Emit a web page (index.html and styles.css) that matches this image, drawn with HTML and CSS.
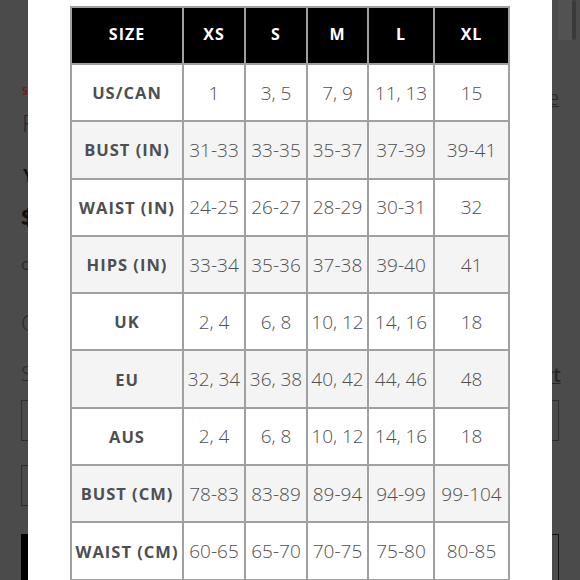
FILE: index.html
```html
<!DOCTYPE html>
<html>
<head>
<meta charset="utf-8">
<link rel="stylesheet" href="styles.css">
</head>
<body>
<div class="screen">
  <div class="strip strip-left">
    <span class="ghost g-red">5</span>
    <span class="ghost g-f">F</span>
    <span class="ghost g-y">Y</span>
    <span class="ghost g-dollar">$</span>
    <span class="ghost g-c">c</span>
    <span class="ghost g-cc">C</span>
    <span class="ghost g-s">S</span>
    <span class="ghost-box gb-1"></span>
    <span class="ghost-box gb-2"></span>
    <span class="ghost-block gl-3"></span>
  </div>
  <div class="modal">
    <table class="chart">
      <colgroup>
        <col class="c-label"><col class="c-xs"><col class="c-s"><col class="c-m"><col class="c-l"><col class="c-xl">
      </colgroup>
      <thead>
        <tr><th>SIZE</th><th>XS</th><th>S</th><th>M</th><th>L</th><th>XL</th></tr>
      </thead>
      <tbody>
        <tr><td class="lbl">US/CAN</td><td>1</td><td>3, 5</td><td>7, 9</td><td>11, 13</td><td>15</td></tr>
        <tr class="alt"><td class="lbl">BUST (IN)</td><td>31-33</td><td>33-35</td><td>35-37</td><td>37-39</td><td>39-41</td></tr>
        <tr><td class="lbl">WAIST (IN)</td><td>24-25</td><td>26-27</td><td>28-29</td><td>30-31</td><td>32</td></tr>
        <tr class="alt"><td class="lbl">HIPS (IN)</td><td>33-34</td><td>35-36</td><td>37-38</td><td>39-40</td><td>41</td></tr>
        <tr><td class="lbl">UK</td><td>2, 4</td><td>6, 8</td><td>10, 12</td><td>14, 16</td><td>18</td></tr>
        <tr class="alt"><td class="lbl">EU</td><td>32, 34</td><td>36, 38</td><td>40, 42</td><td>44, 46</td><td>48</td></tr>
        <tr><td class="lbl">AUS</td><td>2, 4</td><td>6, 8</td><td>10, 12</td><td>14, 16</td><td>18</td></tr>
        <tr class="alt"><td class="lbl">BUST (CM)</td><td>78-83</td><td>83-89</td><td>89-94</td><td>94-99</td><td>99-104</td></tr>
        <tr><td class="lbl">WAIST (CM)</td><td>60-65</td><td>65-70</td><td>70-75</td><td>75-80</td><td>80-85</td></tr>
      </tbody>
    </table>
  </div>
  <div class="strip strip-right">
    <span class="top-shade"></span>
    <span class="scroll-thumb"></span>
    <span class="ghost r-e">e</span>
    <span class="ghost r-rt">rt</span>
    <span class="ghost-box rb-1"></span>
    <span class="ghost-box rb-2"></span>
  </div>
</div>
</body>
</html>
```

FILE: styles.css
```css
html, body {
  margin: 0;
  padding: 0;
  background: #4b4b4b;
}
.screen {
  display: flex;
  width: 580px;
  height: 580px;
  overflow: hidden;
}
.strip {
  position: relative;
  width: 28px;
  flex: 0 0 28px;
  background: #4b4b4b;
  overflow: hidden;
}
.modal {
  flex: 0 0 524px;
  background: #ffffff;
  padding: 6px 0 0 42px;
  box-sizing: border-box;
  overflow: hidden;
}
.ghost {
  position: absolute;
  font-family: "Open Sans", "Liberation Sans", sans-serif;
  color: #1e1e1e;
  line-height: 1;
}
.g-red { left: 22px; top: 86px; font-size: 10px; font-weight: 700; color: #6e1c22; }
.g-f { left: 22px; top: 111px; font-size: 24px; font-weight: 300; color: #262626; }
.g-y { left: 23px; top: 166px; font-size: 18px; font-weight: 700; color: #111; }
.g-dollar { left: 21px; top: 205px; font-size: 24px; font-weight: 700; color: #111; }
.g-c { left: 21px; top: 255px; font-size: 17px; color: #2a2a2a; }
.g-cc { left: 21px; top: 311px; font-size: 22px; font-weight: 300; color: #2a2a2a; }
.g-s { left: 21px; top: 363px; font-size: 21px; font-weight: 300; color: #2a2a2a; }
.ghost-box {
  position: absolute;
  border: 1px solid #2e2e2e;
  box-sizing: border-box;
}
.gb-1 { left: 21px; top: 400px; width: 20px; height: 41px; }
.gb-2 { left: 21px; top: 465px; width: 20px; height: 41px; }
.ghost-block {
  position: absolute;
  left: 21px; top: 534px; width: 20px; height: 60px;
  background: #000;
}
.top-shade {
  position: absolute;
  left: 6px; top: 0; width: 18px; height: 40px;
  background: #525252;
}
.scroll-thumb {
  position: absolute;
  left: 20px; top: 0; width: 4px; height: 40px;
  background: #3a3a3a;
  border-radius: 2px;
}
.r-e {
  left: -4px; top: 88px; font-size: 20px; font-weight: 300;
  color: #262626; text-decoration: underline; text-decoration-thickness: 1px;
}
.r-rt {
  left: -7px; top: 366px; font-size: 19px; font-weight: 600;
  color: #262626; text-decoration: underline; text-decoration-thickness: 1px;
}
.rb-1 { left: -12px; top: 400px; width: 19px; height: 41px; border-color: #2e2e2e; }
.rb-2 { left: -12px; top: 534px; width: 19px; height: 60px; border-color: #111; }

.chart {
  border-collapse: collapse;
  table-layout: fixed;
  width: 438px;
}
.c-label { width: 112px; }
.c-xs { width: 62px; }
.c-s { width: 62px; }
.c-m { width: 61px; }
.c-l { width: 66px; }
.c-xl { width: 75px; }
.chart th,
.chart td {
  border: 2px solid #a0a0a0;
  text-align: center;
  vertical-align: middle;
  padding: 0;
  white-space: nowrap;
}
.chart th {
  height: 52px;
  padding-bottom: 3px;
  background: #000;
  color: #fff;
  font-family: "Open Sans", "Liberation Sans", sans-serif;
  font-weight: 700;
  font-size: 16px;
  letter-spacing: 1px;
}
.chart td {
  height: 55.3px;
  font-family: "Open Sans", "Liberation Sans", sans-serif;
  font-weight: 300;
  font-size: 19px;
  color: #4f4f4f;
  background: #fff;
}
.chart tr.alt td {
  background: #f4f4f4;
}
.chart td.lbl {
  font-weight: 700;
  font-size: 16.5px;
  letter-spacing: 1px;
  color: #4d4f52;
}
```
